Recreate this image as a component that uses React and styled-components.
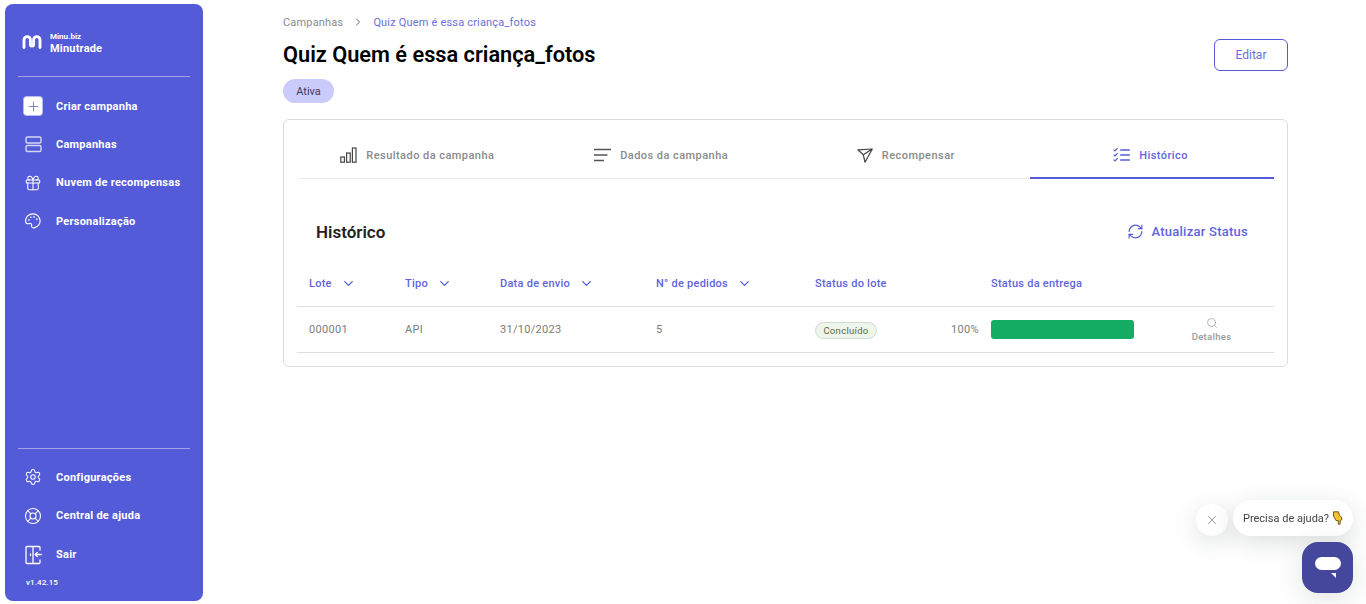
import React from 'react';
import styled, { createGlobalStyle } from 'styled-components';
import { Plus, Gift, Settings, LifeBuoy, ChevronRight, ChevronDown, Search, X, RefreshCw } from 'lucide-react';

const Global = createGlobalStyle`
  html, body { margin: 0; padding: 0; background: #fff; }
  body { font-family: Roboto, "Liberation Sans", sans-serif; overflow: hidden; }
  * { box-sizing: border-box; }
`;

const Page = styled.div`
  display: flex;
  width: 1366px;
  height: 604px;
  padding: 4px 78px 3px 5px;
`;

const Sidebar = styled.aside`
  width: 198px;
  flex: none;
  background: #545bd8;
  border-radius: 8px;
  padding: 0 13px 0 13px;
  display: flex;
  flex-direction: column;
  color: #fff;
`;

const Brand = styled.div`
  height: 73px;
  border-bottom: 1px solid rgba(255,255,255,.45);
  display: flex;
  align-items: center;
  gap: 8px;
  padding: 6px 0 0 4px;
`;

const BrandText = styled.div`
  display: flex;
  flex-direction: column;
  font-weight: 700;
  font-size: 11px;
  letter-spacing: .2px;
  line-height: 13px;
  span { font-size: 8px; line-height: 9px; letter-spacing: 0; margin-bottom: 1px; }
`;

const Nav = styled.nav`
  display: flex;
  flex-direction: column;
  padding-top: 10px;
  flex: 1;
`;

const NavItem = styled.a`
  height: 38.3px;
  display: flex;
  align-items: center;
  gap: 14px;
  padding-left: 6px;
  font-size: 11px;
  font-weight: 700;
  letter-spacing: .25px;
  color: #fff;
`;

const IconBox = styled.span`
  width: 18px;
  height: 18px;
  flex: none;
  display: flex;
  align-items: center;
  justify-content: center;
  border-radius: 3px;
  background: ${p => (p.$filled ? '#fff' : 'transparent')};
  box-shadow: ${p => (p.$filled ? '0 0 0 1px #b9bcf0' : 'none')};
  color: ${p => (p.$filled ? '#7a7fe0' : '#fff')};
`;

const BottomNav = styled.div`
  border-top: 1px solid rgba(255,255,255,.45);
  padding-top: 9.5px;
  display: flex;
  flex-direction: column;
  a:last-of-type { margin-top: 1px; }
`;

const Version = styled.div`
  font-size: 8px;
  font-weight: 500;
  letter-spacing: .1px;
  padding: 4px 0 13px 8px;
  line-height: 10px;
`;

const Main = styled.main`
  flex: 1;
  padding-left: 80px;
  min-width: 0;
`;

const Breadcrumb = styled.div`
  display: flex;
  align-items: center;
  height: 36px;
  padding-top: 1px;
  font-size: 11px;
  letter-spacing: .18px;
  color: #8a8a8a;
  svg { margin: 0 9px 2px 9px; color: #666; }
  b { font-weight: 400; color: #6a6fdc; }
`;

const TitleRow = styled.div`
  display: flex;
  justify-content: space-between;
  align-items: flex-start;
`;

const Title = styled.h1`
  margin: 0;
  padding-top: 1px;
  font-size: 21.75px;
  line-height: 28px;
  font-weight: 600;
  color: #000;
`;

const EditButton = styled.button`
  width: 74px;
  height: 32px;
  margin-top: -1px;
  background: #fff;
  border: 1px solid #545bd8;
  border-radius: 6px;
  color: #6a6fdc;
  font: 400 12px Roboto, sans-serif;
`;

const Pill = styled.div`
  width: 51px;
  height: 24px;
  margin-top: 8px;
  border-radius: 12px;
  background: #cacbfa;
  color: #3b3b5c;
  font-size: 11px;
  display: flex;
  align-items: center;
  justify-content: center;
`;

const Card = styled.section`
  margin-top: 16px;
  height: 248px;
  border: 1px solid #dcdcdc;
  border-radius: 6px;
  padding: 0 13px;
`;

const Tabs = styled.div`
  display: grid;
  grid-template-columns: repeat(4, 1fr);
  margin: 0 0 0 2px;
  height: 59px;
  border-bottom: 1px solid #eaeaea;
`;

const Tab = styled.div`
  display: flex;
  align-items: center;
  justify-content: center;
  gap: 9px;
  font-size: 11px;
  font-weight: 500;
  letter-spacing: .45px;
  color: ${p => (p.$active ? '#5f64dc' : '#8a8a8a')};
  border-bottom: 2px solid ${p => (p.$active ? '#545bd8' : 'transparent')};
  margin-bottom: -1px;
  padding: 13px ${p => p.$right}px 0 0;
  svg { color: ${p => (p.$active ? '#545bd8' : '#444')}; }
`;

const SectionHead = styled.div`
  display: flex;
  justify-content: space-between;
  align-items: center;
  height: 105px;
  padding: 0 26px 0 19px;
  margin-bottom: -23px;
`;

const SectionTitle = styled.h2`
  margin: 0;
  font-size: 17px;
  font-weight: 600;
  color: #222;
`;

const Refresh = styled.div`
  display: flex;
  align-items: center;
  gap: 7px;
  font-size: 13px;
  font-weight: 500;
  letter-spacing: .25px;
  color: #5f64dc;
`;

const Row = styled.div`
  display: grid;
  grid-template-columns: 96px 95px 156px 159px 137px 219px 1fr;
  align-items: center;
  height: ${p => p.$h}px;
  padding-left: 12px;
  border-bottom: 1px solid #dedede;
  font-size: 11px;
  color: ${p => p.$head ? '#5f64dc' : '#7c7c7c'};
  font-weight: ${p => p.$head ? 500 : 400};
  letter-spacing: ${p => p.$head ? '.25px' : '.3px'};
`;

const HeadCell = styled.div`
  display: flex;
  align-items: center;
  gap: 9px;
  padding-left: ${p => p.$pad || 0}px;
`;

const Done = styled.span`
  display: inline-flex;
  align-items: center;
  justify-content: center;
  width: 62px;
  height: 17px;
  margin-top: 2px;
  border: 1px solid #cfdccf;
  border-radius: 9px;
  background: #edf5ec;
  color: #5c6a3c;
  font-size: 9.5px;
`;

const Delivery = styled.div`
  display: flex;
  align-items: center;
  gap: 12px;
  margin-left: -1px;
`;

const Bar = styled.div`
  width: 143px;
  height: 19px;
  border-radius: 3px;
  background: #15ac64;
`;

const Details = styled.div`
  display: flex;
  flex-direction: column;
  align-items: center;
  gap: 2px;
  font-size: 9.5px;
  font-weight: 500;
  color: #9a9a9a;
  margin-left: -22px;
  svg { color: #8c8c8c; }
`;

const Chat = styled.div`
  position: fixed;
  right: 13px;
  bottom: 11px;
  display: flex;
  flex-direction: column;
  align-items: flex-end;
  gap: 6px;
`;

const ChatRow = styled.div`
  display: flex;
  align-items: flex-end;
  gap: 5px;
`;

const CloseBubble = styled.div`
  width: 32px;
  height: 32px;
  border-radius: 50%;
  background: #fff;
  color: #777;
  display: flex;
  align-items: center;
  justify-content: center;
  box-shadow: 0 6px 24px rgba(60,80,80,.18);
`;

const Bubble = styled.div`
  width: 120px;
  height: 36px;
  border-radius: 18px;
  background: #fff;
  color: #444;
  font-size: 11px;
  display: flex;
  align-items: center;
  justify-content: center;
  gap: 3px;
  box-shadow: 0 6px 24px rgba(60,80,80,.18);
`;

const ChatButton = styled.div`
  width: 51px;
  height: 51px;
  border-radius: 16px;
  background: #44479c;
  display: flex;
  align-items: center;
  justify-content: center;
  box-shadow: 0 6px 28px rgba(60,80,80,.16);
`;

const Logo = () => (
  <svg width="20" height="16" viewBox="0 0 20 16" fill="none" stroke="#fff" strokeWidth="2.9" strokeLinecap="round" strokeLinejoin="round">
    <path d="M2 12.500V4.800a3.200 3.200 0 0 1 6.400 0V9.500a1.600 1.600 0 0 0 3.200 0V4.800a3.200 3.200 0 0 1 6.400 0V12.500" />
  </svg>
);

const Stack = () => (
  <svg width="18" height="18" viewBox="0 0 18 18" fill="none" stroke="#d5d6f6" strokeWidth="1.4">
    <rect x="2" y="2" width="15" height="6" rx="1.500" />
    <rect x="2" y="10.500" width="15" height="6" rx="1.500" />
  </svg>
);

const Palette = () => (
  <svg width="18" height="18" viewBox="0 0 24 24" fill="none" stroke="#fff" strokeWidth="1.500" strokeLinecap="round" strokeLinejoin="round">
    <path d="M12 2.500c-5.500 0-10 4-10 9.500 0 2.600 2 4 4 3.600 2-.3 3.400-.8 4 .4.700 1.300-.5 2.500.5 4 .7 1 2.700 1.500 4.700.5 3.800-1.700 6.300-5 6.300-8.500 0-5.500-4.500-9.500-9.500-9.500z" />
    <circle cx="6.500" cy="10.500" r=".4" /><circle cx="9" cy="7" r=".4" /><circle cx="13.500" cy="6.500" r=".4" /><circle cx="17" cy="9.500" r=".4" />
  </svg>
);

const Door = () => (
  <svg width="18" height="20" viewBox="0 0 18 20" fill="none" stroke="#fff" strokeWidth="1.300" strokeLinecap="round" strokeLinejoin="round">
    <path d="M9 1.500H3a1 1 0 0 0-1 1v15a1 1 0 0 0 1 1H9V1.500zM9 1.500h6a1 1 0 0 1 1 1V5M16 15v2.500a1 1 0 0 1-1 1H9M17.300 9.500h-6.300M13.300 7.500l-2.200 2 2.200 2M6.500 9v1.500" />
  </svg>
);

const Bars = () => (
  <svg width="17" height="16" viewBox="0 0 17 16" fill="none" stroke="#444" strokeWidth="1.200">
    <rect x=".8" y="10" width="3.600" height="5.200" /><rect x="6.600" y="6" width="3.600" height="9.200" /><rect x="12.400" y="1" width="3.600" height="14.200" />
  </svg>
);

const Lines = () => (
  <svg width="17" height="14" viewBox="0 0 17 14" fill="none" stroke="#555" strokeWidth="1.300">
    <path d="M0 1.500h17M0 7h13.500M0 12.500h10" />
  </svg>
);

const Send = () => (
  <svg width="16" height="15" viewBox="0 0 16 15" fill="none" stroke="#444" strokeWidth="1.200" strokeLinejoin="round">
    <path d="M.8 1.800L15.300 1 8 14.200 6.300 6.800zM6.300 6.800L15.300 1" />
  </svg>
);

const Checklist = () => (
  <svg width="17" height="14" viewBox="0 0 17 14" fill="none" stroke="#545bd8" strokeWidth="1.200">
    <path d="M.6 1.600l1.400 1.300 2.600-2.700M.6 6.600l1.400 1.300 2.600-2.700M.6 11.600l1.400 1.300 2.600-2.700" />
    <path d="M7.200 2h9.600M7.200 7h9.600M7.200 12h9.600" strokeWidth="1.300" />
  </svg>
);

const Hand = () => (
  <svg width="11" height="14" viewBox="0 0 11 14">
    <path d="M1.500.8h5l.8 3.400 2.400 2v2.600l-1.600 1v3.400H6.300V9.600H4L1.500 5z" fill="#f7c22f" stroke="#5f4a12" strokeWidth=".9" strokeLinejoin="round" />
  </svg>
);

const ChatGlyph = () => (
  <svg width="26" height="21" viewBox="0 0 26 21">
    <rect x="0" y="0" width="26" height="13" rx="6.500" fill="#fff" />
    <path d="M16 16h5v5z" fill="#fff" />
  </svg>
);

const topItems = [
  { label: 'Criar campanha', icon: <Plus size={15} strokeWidth={1.5} />, filled: true },
  { label: 'Campanhas', icon: <Stack /> },
  { label: 'Nuvem de recompensas', icon: <Gift size={18} strokeWidth={1.4} /> },
  { label: 'Personalização', icon: <Palette /> },
];

const bottomItems = [
  { label: 'Configurações', icon: <Settings size={18} strokeWidth={1.4} /> },
  { label: 'Central de ajuda', icon: <LifeBuoy size={18} strokeWidth={1.4} /> },
  { label: 'Sair', icon: <Door /> },
];

const renderItem = (it) => (
  <NavItem key={it.label}>
    <IconBox $filled={it.filled}>{it.icon}</IconBox>
    {it.label}
  </NavItem>
);

const sortIcon = <ChevronDown size={15} strokeWidth={2} color="#545bd8" />;

export default function App() {
  return (
    <Page>
      <Global />
      <Sidebar>
        <Brand>
          <Logo />
          <BrandText><span>Minu.biz</span>Minutrade</BrandText>
        </Brand>
        <Nav>{topItems.map(renderItem)}</Nav>
        <BottomNav>
          {bottomItems.map(renderItem)}
          <Version>v1.42.15</Version>
        </BottomNav>
      </Sidebar>
      <Main>
        <Breadcrumb>
          Campanhas<ChevronRight size={12} strokeWidth={2} />
          <b>Quiz Quem é essa criança_fotos</b>
        </Breadcrumb>
        <TitleRow>
          <Title>Quiz Quem é essa criança_fotos</Title>
          <EditButton>Editar</EditButton>
        </TitleRow>
        <Pill>Ativa</Pill>
        <Card>
          <Tabs>
            <Tab $right={7}><Bars />Resultado da campanha</Tab>
            <Tab $right={7}><Lines />Dados da campanha</Tab>
            <Tab $right={5}><Send />Recompensar</Tab>
            <Tab $right={3} $active><Checklist />Histórico</Tab>
          </Tabs>
          <SectionHead>
            <SectionTitle>Histórico</SectionTitle>
            <Refresh><RefreshCw size={17} strokeWidth={1.6} color="#545bd8" />Atualizar Status</Refresh>
          </SectionHead>
          <Row $head $h={46}>
            <HeadCell>Lote {sortIcon}</HeadCell>
            <HeadCell>Tipo {sortIcon}</HeadCell>
            <HeadCell>Data de envio {sortIcon}</HeadCell>
            <HeadCell>N° de pedidos {sortIcon}</HeadCell>
            <HeadCell>Status do lote</HeadCell>
            <HeadCell $pad={39}>Status da entrega</HeadCell>
            <div />
          </Row>
          <Row $h={46}>
            <div>000001</div>
            <div>API</div>
            <div>31/10/2023</div>
            <div>5</div>
            <div><Done>Concluído</Done></div>
            <Delivery>100%<Bar /></Delivery>
            <Details><Search size={12} strokeWidth={1.2} />Detalhes</Details>
          </Row>
        </Card>
      </Main>
      <Chat>
        <ChatRow>
          <CloseBubble><X size={14} strokeWidth={1.3} /></CloseBubble>
          <Bubble>Precisa de ajuda? <Hand /></Bubble>
        </ChatRow>
        <ChatButton><ChatGlyph /></ChatButton>
      </Chat>
    </Page>
  );
}
